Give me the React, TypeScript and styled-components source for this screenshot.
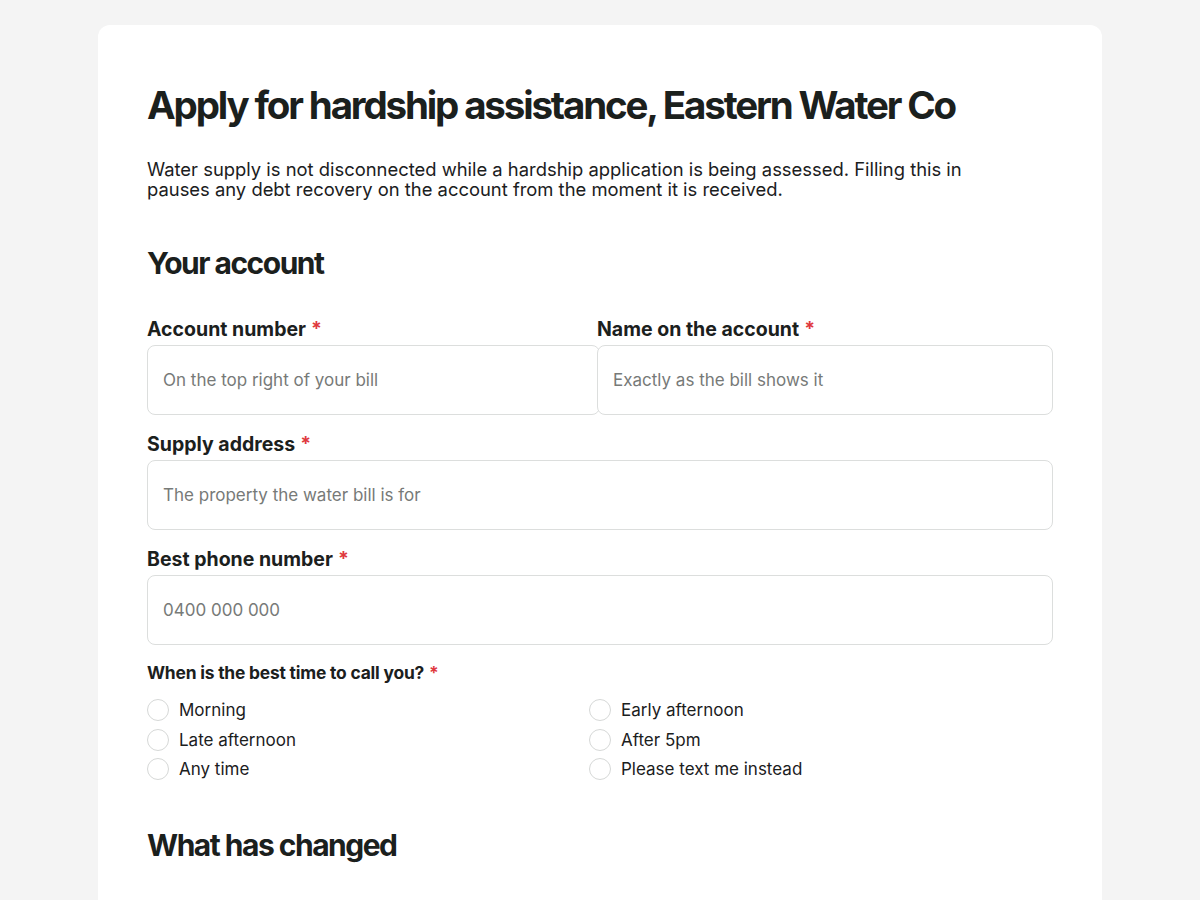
import React from "react";
import styled, { createGlobalStyle } from "styled-components";

const Global = createGlobalStyle`
  html, body { margin: 0; padding: 0; background: #f4f4f4; }
  body { font-family: Inter, "Noto Sans", sans-serif; color: #1b201d; }
  * { box-sizing: border-box; }
`;

const Page = styled.div`
  padding: 25px 98px 0;
  min-height: 900px;
`;

const Card = styled.main`
  background: #ffffff;
  border-radius: 12px 12px 0 0;
  padding: 56px 49px 40px;
  min-height: 875px;
`;

const Title = styled.h1`
  margin: 0;
  font-family: Inter, sans-serif;
  font-weight: 700;
  font-size: 38.5px;
  line-height: 48px;
  letter-spacing: -2.15px;
  color: #1b201d;
`;

const Lead = styled.p`
  margin: 30px 0 0;
  font-size: 18.4px;
  line-height: 20px;
  color: #1b201d;
`;

const SectionTitle = styled.h2<{ $top: number }>`
  margin: ${(p) => p.$top}px 0 0;
  font-family: Inter, sans-serif;
  font-weight: 700;
  font-size: 30px;
  line-height: 40px;
  letter-spacing: -1.5px;
  color: #1b201d;
`;

const Fields = styled.div`
  display: flex;
  flex-direction: column;
  gap: 18px;
  margin-top: 35px;
`;

const Pair = styled.div`
  display: grid;
  grid-template-columns: 450px 1fr;
`;

const Field = styled.label`
  display: flex;
  flex-direction: column;
  gap: 5px;
`;

const Label = styled.span`
  font-size: 19.5px;
  font-weight: 700;
  line-height: 22px;
  color: #1b201d;
`;

const Req = styled.span`
  color: #e0393e;
  margin-left: 5px;
`;

const Input = styled.input<{ $over?: boolean }>`
  display: block;
  height: 70px;
  width: ${(p) => (p.$over ? "calc(100% + 3px)" : "100%")};
  border: 1px solid #dcdedd;
  border-radius: 8px;
  background: #fff;
  padding: 0 15px;
  font-family: Inter, sans-serif;
  font-size: 17px;
  color: #1b201d;
  outline: none;
  position: relative;
  &::placeholder { color: #777a78; }
`;

const Question = styled.div`
  margin-top: 17px;
  font-family: Inter, sans-serif;
  font-size: 17.4px;
  font-weight: 700;
  line-height: 22px;
  letter-spacing: -0.2px;
  color: #1b201d;
`;

const Options = styled.div`
  display: grid;
  grid-template-columns: 442px 1fr;
  row-gap: 7.5px;
  margin-top: 15px;
`;

const Option = styled.label`
  display: flex;
  align-items: center;
  gap: 10px;
  font-family: Inter, sans-serif;
  font-size: 17px;
  line-height: 22px;
  color: #1b201d;
`;

const Radio = styled.span`
  width: 22px;
  height: 22px;
  border-radius: 50%;
  border: 1px solid #d6d8d7;
  background: #fff;
  flex: none;
`;

const options = [
  "Morning",
  "Early afternoon",
  "Late afternoon",
  "After 5pm",
  "Any time",
  "Please text me instead",
];

export default function App() {
  return (
    <>
      <Global />
      <Page>
        <Card>
          <Title>Apply for hardship assistance, Eastern Water Co</Title>
          <Lead>
            Water supply is not disconnected while a hardship application is being assessed. Filling this in
            <br />
            pauses any debt recovery on the account from the moment it is received.
          </Lead>
          <SectionTitle $top={44}>Your account</SectionTitle>
          <Fields>
            <Pair>
              <Field>
                <Label>
                  Account number<Req>*</Req>
                </Label>
                <Input $over placeholder="On the top right of your bill" />
              </Field>
              <Field>
                <Label>
                  Name on the account<Req>*</Req>
                </Label>
                <Input placeholder="Exactly as the bill shows it" />
              </Field>
            </Pair>
            <Field>
              <Label>
                Supply address<Req>*</Req>
              </Label>
              <Input placeholder="The property the water bill is for" />
            </Field>
            <Field>
              <Label>
                Best phone number<Req>*</Req>
              </Label>
              <Input placeholder="0400 000 000" />
            </Field>
          </Fields>
          <Question>
            When is the best time to call you?<Req>*</Req>
          </Question>
          <Options>
            {options.map((o) => (
              <Option key={o}>
                <Radio />
                {o}
              </Option>
            ))}
          </Options>
          <SectionTitle $top={45}>What has changed</SectionTitle>
        </Card>
      </Page>
    </>
  );
}
